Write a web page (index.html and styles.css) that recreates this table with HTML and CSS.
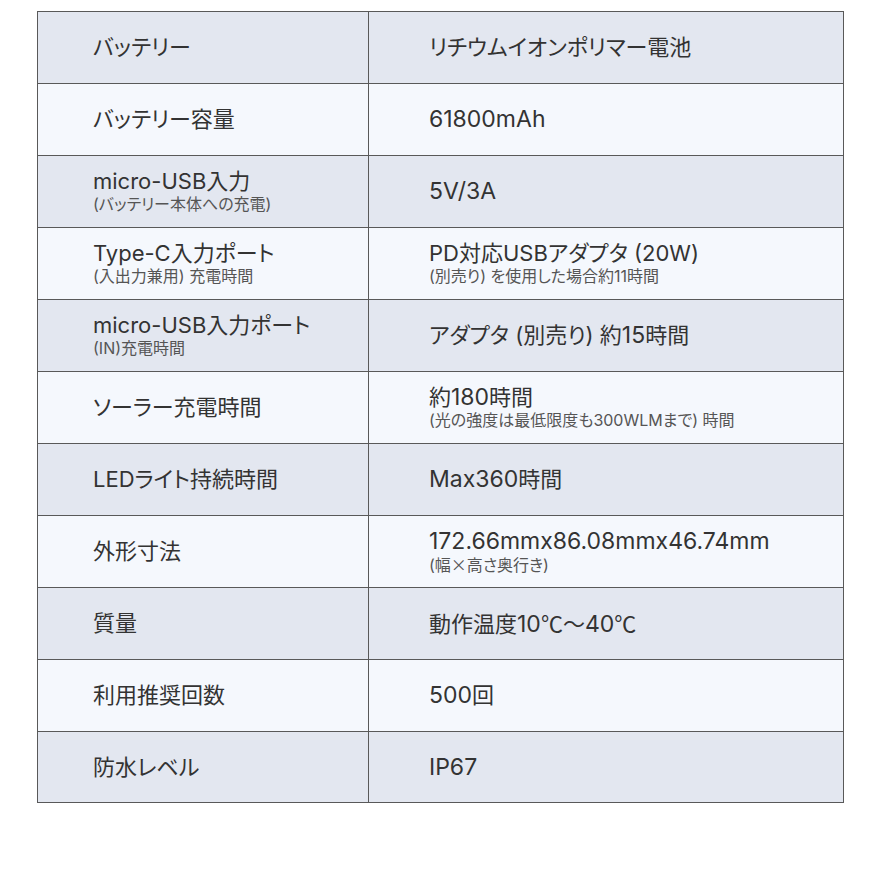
FILE: index.html
```html
<!DOCTYPE html>
<html lang="ja">
<head>
<meta charset="utf-8">
<link rel="stylesheet" href="styles.css">
</head>
<body>
<div class="spec">
  <div class="row odd"><div class="cell key"><div class="main">バッテリー</div></div><div class="cell val"><div class="main">リチウムイオンポリマー電池</div></div></div>
  <div class="row even"><div class="cell key"><div class="main">バッテリー容量</div></div><div class="cell val"><div class="main"><span class="num">61800mAh</span></div></div></div>
  <div class="row odd"><div class="cell key"><div class="main">micro-USB入力</div><div class="sub">(バッテリー本体への充電)</div></div><div class="cell val"><div class="main"><span class="num">5V/3A</span></div></div></div>
  <div class="row even"><div class="cell key"><div class="main">Type-C入力ポート</div><div class="sub">(入出力兼用) 充電時間</div></div><div class="cell val"><div class="main">PD対応USBアダプタ (20W)</div><div class="sub">(別売り) を使用した場合約11時間</div></div></div>
  <div class="row odd"><div class="cell key"><div class="main">micro-USB入力ポート</div><div class="sub">(IN)充電時間</div></div><div class="cell val"><div class="main">アダプタ (別売り) 約<span class="num">15</span>時間</div></div></div>
  <div class="row even"><div class="cell key"><div class="main">ソーラー充電時間</div></div><div class="cell val"><div class="main">約<span class="num">180</span>時間</div><div class="sub">(光の強度は最低限度も300WLMまで) 時間</div></div></div>
  <div class="row odd"><div class="cell key"><div class="main">LEDライト持続時間</div></div><div class="cell val"><div class="main"><span class="num">Max360</span>時間</div></div></div>
  <div class="row even"><div class="cell key"><div class="main">外形寸法</div></div><div class="cell val"><div class="main"><span class="num">172.66mmx86.08mmx46.74mm</span></div><div class="sub">(幅<span class="jp">×</span>高さ奥行き)</div></div></div>
  <div class="row odd"><div class="cell key"><div class="main">質量</div></div><div class="cell val"><div class="main">動作温度<span class="num">10</span><span class="jp">℃～</span><span class="num">40</span><span class="jp">℃</span></div></div></div>
  <div class="row even"><div class="cell key"><div class="main">利用推奨回数</div></div><div class="cell val"><div class="main"><span class="num">500</span>回</div></div></div>
  <div class="row odd"><div class="cell key"><div class="main">防水レベル</div></div><div class="cell val"><div class="main"><span class="num">IP67</span></div></div></div>
</div>
</body>
</html>
```

FILE: styles.css
```css
html, body { margin: 0; padding: 0; background: #ffffff; }
body { font-family: Inter, "Noto Sans CJK JP", sans-serif; color: #333333; }
.spec {
  width: 805px;
  margin: 11px 0 0 37px;
  border: 1px solid #595959;
}
.row {
  display: grid;
  grid-template-columns: 331px 1fr;
  height: 71px;
  border-top: 1px solid #595959;
}
.row:first-child { border-top: none; }
.row:last-child { height: 70px; }
.odd { background: #e3e7f0; }
.even { background: #f5f8fd; }
.cell {
  display: flex;
  flex-direction: column;
  justify-content: center;
}
.key { padding-left: 55px; border-right: 1px solid #595959; }
.val { padding-left: 60px; }
.main {
  font-size: 22px;
  line-height: 25px;
  font-feature-settings: "palt";
  white-space: nowrap;
}
.num { font-size: 23px; }
.jp { font-family: "Noto Sans CJK JP", sans-serif; font-feature-settings: normal; }
.sub {
  font-size: 16px;
  line-height: 20px;
  color: #555555;
  font-feature-settings: "palt";
  white-space: nowrap;
}
```
